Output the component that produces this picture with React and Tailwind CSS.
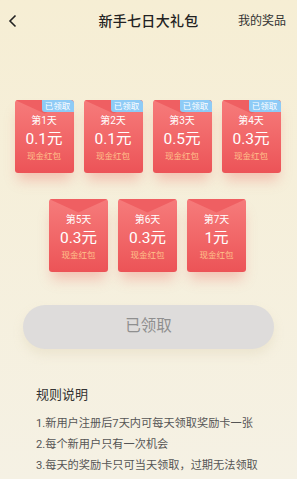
import React from "react";

const font = { fontFamily: "Roboto, 'Noto Sans CJK SC', sans-serif" };

function Card({ day, amount, claimed }) {
  return (
    <div className="relative w-[59px] h-[73px] rounded-[3px] overflow-hidden bg-gradient-to-b from-[#f67b7b] to-[#ec5357] shadow-[0_10px_12px_-3px_rgba(238,110,100,0.35)]">
      <svg className="absolute top-0 left-0" width="59" height="14" viewBox="0 0 59 14">
        <polygon points="0,0 29.5,13.5 59,0" fill="#ef5f62" />
      </svg>
      {claimed && (
        <div className="absolute top-0 right-0 w-[32px] h-[12px] bg-[#8ecbf6] rounded-bl-[3px] rounded-tr-[3px] flex items-center justify-center text-[8.5px] leading-none text-white">
          已领取
        </div>
      )}
      <div className="relative flex flex-col items-center text-white">
        <div className="mt-[15px] h-[12px] leading-[12px] text-[10px]">第{day}天</div>
        <div className="mt-[3px] h-[18px] leading-[18px] text-[15.5px]">{amount}元</div>
        <div className="mt-[2px] h-[12px] leading-[12px] text-[8.5px] text-[#ffc28c]">现金红包</div>
      </div>
    </div>
  );
}

export default function App() {
  const row1 = [
    ["1", "0.1"],
    ["2", "0.1"],
    ["3", "0.5"],
    ["4", "0.3"],
  ];
  const row2 = [
    ["5", "0.3"],
    ["6", "0.3"],
    ["7", "1"],
  ];
  return (
    <div
      style={font}
      className="w-[297px] h-[479px] overflow-hidden bg-gradient-to-b from-[#f6eed4] to-[#f5f1e4] flex flex-col"
    >
      <div className="relative h-[42px] flex items-center justify-center">
        <svg className="absolute left-[8px] top-[14px]" width="10" height="14" viewBox="0 0 10 14">
          <polyline points="7.5,1.5 2,7 7.5,12.5" fill="none" stroke="#222" strokeWidth="1.6" />
        </svg>
        <div className="text-[14px] font-medium text-[#222] tracking-[0.3px]">新手七日大礼包</div>
        <div className="absolute right-[11px] top-[13px] text-[12px] leading-[16px] text-[#333]">我的奖品</div>
      </div>
      <div className="mt-[58px] flex justify-center gap-[10px] pr-[2px]">
        {row1.map(([d, a]) => (
          <Card key={d} day={d} amount={a} claimed />
        ))}
      </div>
      <div className="mt-[26px] flex justify-center gap-[10px] pr-[2px]">
        {row2.map(([d, a]) => (
          <Card key={d} day={d} amount={a} />
        ))}
      </div>
      <div className="mt-[33px] mx-[23px] h-[44px] rounded-full bg-[#dedcdb] flex items-center justify-center text-[15.5px] text-[#8f8f8f] shadow-[0_6px_10px_rgba(220,210,180,0.35)]">
        已领取
      </div>
      <div className="px-[36px] mt-[37px]">
        <div className="text-[13px] leading-[18px] text-[#333]">规则说明</div>
        <div className="mt-[11px] flex flex-col gap-[4px] text-[11.2px] leading-[17px] text-[#555]">
          <div>1.新用户注册后7天内可每天领取奖励卡一张</div>
          <div>2.每个新用户只有一次机会</div>
          <div>3.每天的奖励卡只可当天领取，过期无法领取</div>
        </div>
      </div>
    </div>
  );
}
